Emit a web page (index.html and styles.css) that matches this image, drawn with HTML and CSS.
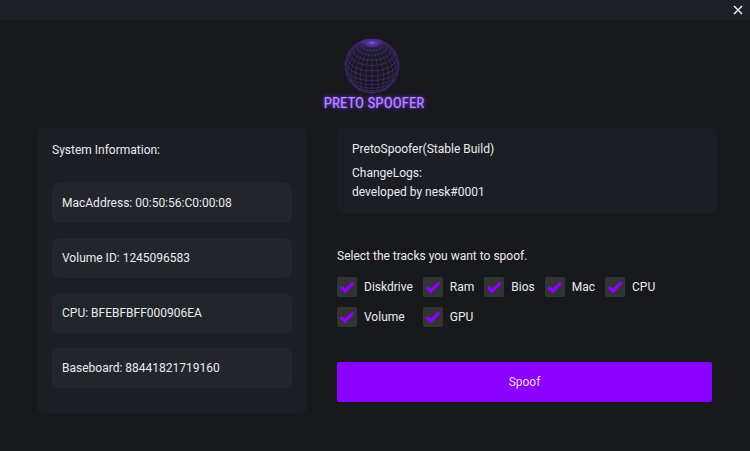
FILE: index.html
```html
<!DOCTYPE html>
<html lang="en">
<head>
<meta charset="utf-8">
<meta name="viewport" content="width=device-width, initial-scale=1">
<title>Preto Spoofer</title>
<link rel="stylesheet" href="styles.css">
</head>
<body>
<header class="titlebar">
  <button class="close" type="button" aria-label="Close">
    <svg viewBox="0 0 10 10" width="10" height="10" aria-hidden="true"><path d="M1 1l8 8M9 1l-8 8"/></svg>
  </button>
</header>
<main class="content">
  <div class="logo">
    <svg class="globe" viewBox="-28 -30 60 60" width="60" height="60" aria-hidden="true">
      <defs>
        <radialGradient id="pole">
          <stop offset="0" stop-color="#9a5cff"/>
          <stop offset="0.4" stop-color="#6a35c8" stop-opacity="0.7"/>
          <stop offset="1" stop-color="#5b2bb0" stop-opacity="0"/>
        </radialGradient>
      </defs>
      <g id="wires"></g>
      <ellipse cx="0" cy="-23" rx="10" ry="5" fill="url(#pole)"/>
    </svg>
    <h1 class="wordmark">PRETO SPOOFER</h1>
  </div>
  <div class="columns">
    <section class="card system">
      <h2 class="heading">System Information:</h2>
      <ul class="fields">
        <li class="field">MacAddress: 00:50:56:C0:00:08</li>
        <li class="field">Volume ID: 1245096583</li>
        <li class="field">CPU: BFEBFBFF000906EA</li>
        <li class="field">Baseboard: 88441821719160</li>
      </ul>
    </section>
    <div class="side">
      <section class="card news">
        <h2 class="heading">PretoSpoofer(Stable Build)</h2>
        <p class="log">ChangeLogs:<br>developed by nesk#0001</p>
      </section>
      <form class="tracks">
        <fieldset class="group">
          <legend class="legend">Select the tracks you want to spoof.</legend>
          <div class="options">
            <label class="option"><input type="checkbox" checked>Diskdrive</label>
            <label class="option"><input type="checkbox" checked>Ram</label>
            <label class="option"><input type="checkbox" checked>Bios</label>
            <label class="option"><input type="checkbox" checked>Mac</label>
            <label class="option"><input type="checkbox" checked>CPU</label>
            <label class="option"><input type="checkbox" checked>Volume</label>
            <label class="option"><input type="checkbox" checked>GPU</label>
          </div>
        </fieldset>
        <button class="submit" type="button">Spoof</button>
      </form>
    </div>
  </div>
</main>
<script src="globe.js"></script>
</body>
</html>
```
FILE: styles.css
```css
* {
  box-sizing: border-box;
}

body {
  margin: 0;
  min-height: 100vh;
  background: #18191d;
  color: #ebebed;
  font: 12px/20px Roboto, "Liberation Sans", sans-serif;
}

h1, h2, p, ul {
  margin: 0;
  padding: 0;
  font-size: inherit;
  font-weight: 400;
}

.titlebar {
  display: flex;
  justify-content: flex-end;
  height: 20px;
  padding-right: 4px;
  background: #1f2026;
}

.close {
  display: grid;
  place-items: center;
  width: 16px;
  padding: 0;
  border: 0;
  background: none;
}

.close path {
  stroke: #fff;
  stroke-width: 1.4;
}

.content {
  padding: 16px 33px 16px 37px;
}

.logo {
  display: flex;
  flex-direction: column;
  align-items: center;
  height: 92px;
  padding-right: 6px;
}

.globe {
  flex: none;
}

#wires path {
  fill: none;
  stroke: #7840e0;
  stroke-width: 1.3;
}

.wordmark {
  margin-top: -5px;
  color: #b48cff;
  font: 15px/24px "Roboto Condensed", "Liberation Sans Narrow", Roboto, sans-serif;
  white-space: nowrap;
  text-shadow: 0 0 2px #7f45ea, 0 0 5px #6a30d8;
}

.columns {
  display: grid;
  grid-template-columns: 27fr 38fr;
  gap: 30px;
}

.card {
  background: #1b1e25;
  border-radius: 5px;
}

.system {
  padding: 12px 15px 25px;
}

.fields {
  display: grid;
  gap: 15px;
  margin-top: 23px;
  list-style: none;
}

.field {
  padding: 10px;
  background: #22252c;
  border-radius: 7px;
}

.news {
  padding: 11px 15px;
}

.log {
  margin-top: 5px;
  line-height: 19px;
}

.tracks {
  margin-top: 33px;
  padding-right: 5px;
}

.group {
  margin: 0;
  padding: 0;
  border: 0;
}

.legend {
  padding: 0;
}

.options {
  display: grid;
  grid-template-columns: repeat(5, auto);
  justify-content: start;
  gap: 10px;
  margin-top: 11px;
}

.option {
  display: flex;
  align-items: center;
  gap: 7px;
}

.option input {
  appearance: none;
  width: 20px;
  height: 20px;
  margin: 0;
  background: #333;
  border-radius: 2px;
}

.option input:checked::before {
  content: "";
  display: block;
  height: 100%;
  background: #8b00ff;
  clip-path: polygon(13% 56%, 23% 45%, 40% 58%, 76% 23%, 88% 33%, 40% 83%);
}

.submit {
  width: 100%;
  height: 40px;
  margin-top: 35px;
  padding: 0;
  border: 0;
  border-radius: 2px;
  background: #8b00ff;
  color: #ebdcff;
  font: inherit;
}
```
FILE: globe.js
```js
// Wireframe sphere, tilted so that its pole faces the viewer.
const RADIUS = 27;
const TILT = 0.57;
const wires = document.getElementById("wires");

function project(polar, azimuth) {
  const x = Math.sin(polar) * Math.sin(azimuth);
  const z = Math.sin(polar) * Math.cos(azimuth);
  const y = Math.cos(polar);
  return {
    x: RADIUS * x,
    y: -RADIUS * (y * Math.cos(TILT) - z * Math.sin(TILT)),
    front: y * Math.sin(TILT) + z * Math.cos(TILT) > 0
  };
}

function draw(points, opacity) {
  let d = "";
  let pen = false;
  for (const p of points) {
    if (p.front) {
      d += (pen ? "L" : "M") + p.x.toFixed(2) + " " + p.y.toFixed(2);
    }
    pen = p.front;
  }
  const path = document.createElementNS("http://www.w3.org/2000/svg", "path");
  path.setAttribute("d", d);
  path.setAttribute("opacity", opacity);
  wires.appendChild(path);
}

const steps = [...Array(61).keys()];
for (let i = 1; i < 16; i++) {
  draw(steps.map(s => project(i * Math.PI / 16, s * Math.PI / 30)), 0.27);
}
for (let i = 0; i < 28; i++) {
  draw(steps.map(s => project(0.12 + s * 3 / 60, i * Math.PI / 14)), 0.22);
}
```
